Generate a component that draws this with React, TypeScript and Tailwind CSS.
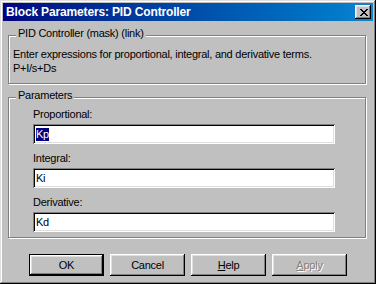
const raised =
  "shadow-[inset_-1px_-1px_#000,inset_1px_1px_#fff,inset_-2px_-2px_#808080,inset_2px_2px_#dfdfdf]";
const sunken =
  "shadow-[inset_1px_1px_#808080,inset_-1px_-1px_#fff,inset_2px_2px_#000,inset_-2px_-2px_#dfdfdf]";
const etched = "border border-[#808080] shadow-[1px_1px_0_#fff,inset_1px_1px_0_#fff]";

const CloseGlyph = () => (
  <svg width="8" height="7" viewBox="0 0 8 7" shapeRendering="crispEdges">
    <path
      d="M0 0h2v1H0zM6 0h2v1H6zM1 1h2v1H1zM5 1h2v1H5zM2 2h4v1H2zM3 3h2v1H3zM2 4h4v1H2zM1 5h2v1H1zM5 5h2v1H5zM0 6h2v1H0zM6 6h2v1H6z"
      fill="#000"
    />
  </svg>
);

const GroupBox = ({ title, className, children }: { title: string; className: string; children: React.ReactNode }) => (
  <div className={`relative ${etched} ${className}`}>
    <span className="absolute left-[7px] -top-[9px] px-[2px] bg-[#c0c0c0] leading-[13px]">{title}</span>
    {children}
  </div>
);

const Field = ({ label, value, selected, className }: { label: string; value: string; selected?: boolean; className?: string }) => (
  <div className={className}>
    <div className="leading-[13px]">{label}</div>
    <div className={`mt-[3px] h-[20px] w-[302px] bg-white ${sunken} flex items-center pl-[3px]`}>
      {selected ? (
        <span className="bg-[#000080] text-white leading-[13px]">{value}</span>
      ) : (
        <span className="leading-[13px]">{value}</span>
      )}
    </div>
  </div>
);

const Button = ({ children, isDefault, disabled }: { children: React.ReactNode; isDefault?: boolean; disabled?: boolean }) => (
  <div
    className={`w-[75px] h-[22px] flex items-center justify-center bg-[#c0c0c0] ${
      isDefault ? "border border-black" : ""
    }`}
  >
    <div
      className={`w-full h-full flex items-center justify-center ${raised} ${
        disabled ? "text-[#808080] [text-shadow:1px_1px_0_#fff]" : "text-black"
      }`}
    >
      {children}
    </div>
  </div>
);

export default function App() {
  return (
    <div
      className="w-[376px] h-[284px] bg-[#c0c0c0] p-[3px] text-black text-[11px] tracking-[-0.25px] shadow-[inset_-1px_-1px_#000,inset_1px_1px_#dfdfdf,inset_-2px_-2px_#808080,inset_2px_2px_#fff]"
      style={{ fontFamily: '"Liberation Sans", Arial, sans-serif' }}
    >
      <div className="h-[18px] flex items-center justify-between pl-[3px] pr-[2px] bg-gradient-to-r from-[#000080] to-[#1084d0]">
        <span className="text-white font-bold text-[12px] tracking-[-0.15px] leading-[14px]">
          Block Parameters: PID Controller
        </span>
        <div className={`w-[16px] h-[14px] bg-[#c0c0c0] ${raised} flex items-center justify-center pl-[1px]`}>
          <CloseGlyph />
        </div>
      </div>

      <GroupBox title="PID Controller (mask) (link)" className="mt-[14px] ml-[5px] w-[358px] h-[49px] pt-[11px] pl-[4px]">
        <div className="leading-[14px]">
          Enter expressions for proportional, integral, and derivative terms.
          <br />
          P+I/s+Ds
        </div>
      </GroupBox>

      <GroupBox title="Parameters" className="mt-[13px] ml-[5px] w-[358px] h-[141px] pt-[10px] pl-[24px]">
        <Field label="Proportional:" value="Kp" selected />
        <Field label="Integral:" value="Ki" className="mt-[8px]" />
        <Field label="Derivative:" value="Kd" className="mt-[8px]" />
      </GroupBox>

      <div className="mt-[16px] ml-[26px] flex gap-[6px]">
        <Button isDefault>OK</Button>
        <Button>Cancel</Button>
        <Button>
          <span>
            <u>H</u>elp
          </span>
        </Button>
        <Button disabled>
          <span>
            <u>A</u>pply
          </span>
        </Button>
      </div>
    </div>
  );
}
